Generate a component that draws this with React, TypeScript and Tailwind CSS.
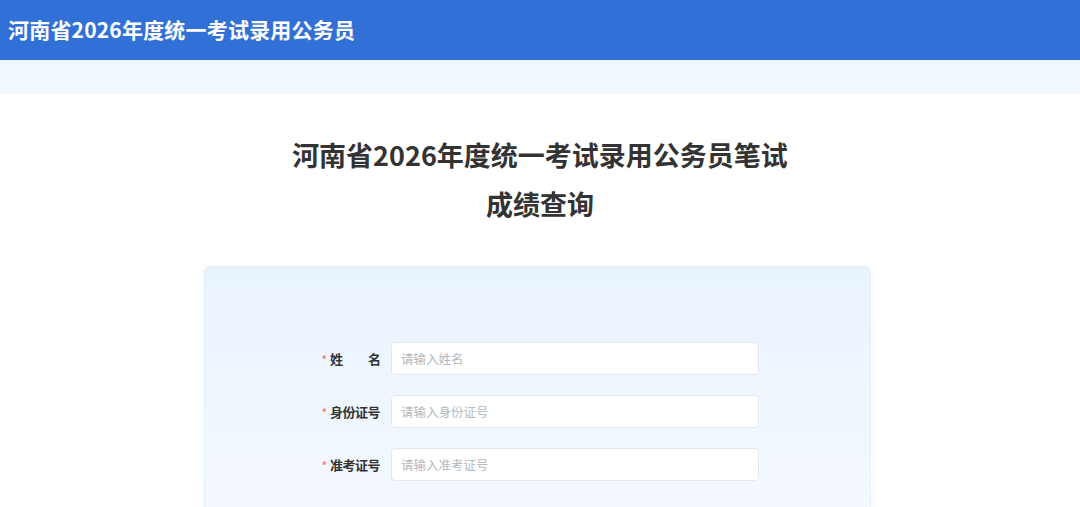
import React from "react";

const font = { fontFamily: '"Noto Sans CJK SC", "Noto Sans", sans-serif' };

function Field({ label, placeholder, spaced }: { label: string; placeholder: string; spaced?: boolean }) {
  return (
    <div className="flex items-center">
      <div className="flex items-center w-[70px] pr-[10px] justify-end">
        <span className="text-[#f56c6c] text-[12px] mr-[3px] leading-none mt-[2px]">*</span>
        {spaced ? (
          <span className="w-[51px] flex justify-between text-[13px] font-bold text-[#333]">
            <span>{label[0]}</span>
            <span>{label[1]}</span>
          </span>
        ) : (
          <span className="w-[51px] text-[13px] font-bold text-[#333] tracking-[-0.5px]">{label}</span>
        )}
      </div>
      <input
        className="w-[368px] h-[33px] rounded-[4px] border border-[#e3e8ef] bg-white px-[9px] text-[12.5px] text-[#333] placeholder:text-[#b4b9c0] outline-none"
        placeholder={placeholder}
        style={font}
      />
    </div>
  );
}

export default function App() {
  return (
    <div className="min-h-screen bg-white" style={font}>
      {/* top bar */}
      <div className="h-[60px] bg-[#3170d6] flex items-center pl-[8px]">
        <h1 className="text-white font-bold text-[21px] tracking-[0.2px]">河南省2026年度统一考试录用公务员</h1>
      </div>
      <div className="h-[34px] bg-[#f1f8fd]" />

      {/* page title */}
      <div className="pt-[36px] text-center text-[#333] font-bold text-[27px] leading-[49px]">
        <div>河南省2026年度统一考试录用公务员笔试</div>
        <div>成绩查询</div>
      </div>

      {/* query card */}
      <div className="mt-[38px] w-[667px] ml-[204px] rounded-[6px] border border-[#e6eef8] bg-gradient-to-b from-[#e9f3fe] to-[#f5f9fe] pt-[75px] pb-[40px] shadow-[0_0_6px_rgba(120,150,190,0.08)]">
        <div className="flex flex-col gap-[20px] pl-[116px]">
          <Field label="姓名" placeholder="请输入姓名" spaced />
          <Field label="身份证号" placeholder="请输入身份证号" />
          <Field label="准考证号" placeholder="请输入准考证号" />
        </div>
      </div>
    </div>
  );
}
